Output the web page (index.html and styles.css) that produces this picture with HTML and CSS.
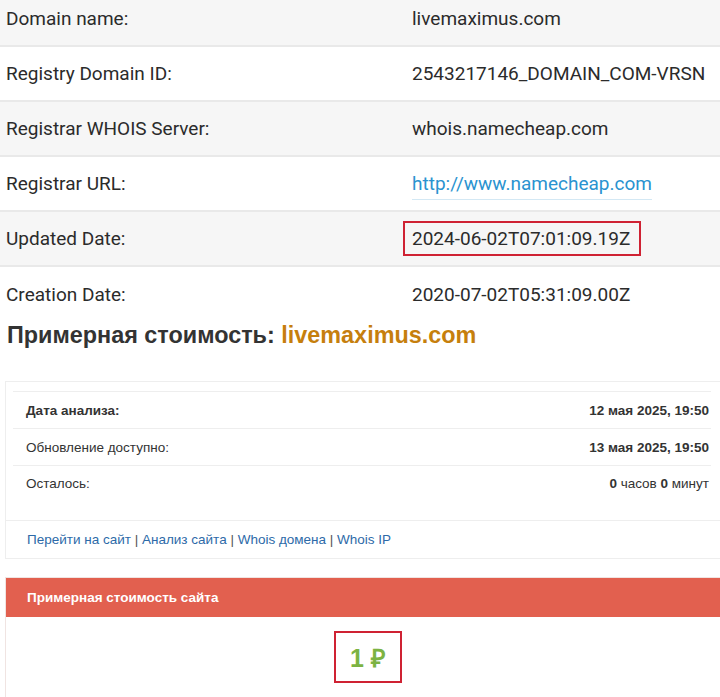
FILE: index.html
```html
<!DOCTYPE html>
<html lang="ru">
<head>
    <meta charset="UTF-8">
    <meta name="viewport" content="width=device-width, initial-scale=1.0">
    <title>Whois livemaximus.com</title>
    <link rel="stylesheet" href="styles.css">
</head>
<body>
    <div class="whois">
        <div class="whois-row">
            <span class="whois-label">Domain name:</span>
            <span class="whois-value">livemaximus.com</span>
        </div>
        <div class="whois-row">
            <span class="whois-label">Registry Domain ID:</span>
            <span class="whois-value">2543217146_DOMAIN_COM-VRSN</span>
        </div>
        <div class="whois-row">
            <span class="whois-label">Registrar WHOIS Server:</span>
            <span class="whois-value">whois.namecheap.com</span>
        </div>
        <div class="whois-row">
            <span class="whois-label">Registrar URL:</span>
            <span class="whois-value"><a class="whois-link" href="#">http://www.namecheap.com</a></span>
        </div>
        <div class="whois-row">
            <span class="whois-label">Updated Date:</span>
            <span class="whois-value"><span class="marked">2024-06-02T07:01:09.19Z</span></span>
        </div>
        <div class="whois-row">
            <span class="whois-label">Creation Date:</span>
            <span class="whois-value">2020-07-02T05:31:09.00Z</span>
        </div>
    </div>

    <h2 class="price-title">Примерная стоимость: <span class="domain">livemaximus.com</span></h2>

    <div class="info-box">
        <table class="info-table">
            <tr>
                <td><b>Дата анализа:</b></td>
                <td class="right"><b>12 мая 2025, 19:50</b></td>
            </tr>
            <tr>
                <td>Обновление доступно:</td>
                <td class="right"><b>13 мая 2025, 19:50</b></td>
            </tr>
            <tr class="last">
                <td>Осталось:</td>
                <td class="right"><b>0</b> часов <b>0</b> минут</td>
            </tr>
        </table>
        <div class="info-links">
            <a href="#">Перейти на сайт</a> | <a href="#">Анализ сайта</a> | <a href="#">Whois домена</a> | <a href="#">Whois IP</a>
        </div>
    </div>

    <div class="cost-panel">
        <div class="cost-head">Примерная стоимость сайта</div>
        <div class="cost-body">
            <span class="cost-value">1 ₽</span>
        </div>
    </div>
</body>
</html>
```

FILE: styles.css
```css
* {
    margin: 0;
    padding: 0;
    box-sizing: border-box;
}

body {
    background-color: #fff;
    color: #333;
    font-family: "Liberation Sans", Arial, sans-serif;
    overflow: hidden;
}

/* whois table */
.whois {
    margin-top: -8px;
    font-family: Roboto, "Liberation Sans", sans-serif;
    font-size: 19px;
    color: #2b2b2b;
}

.whois-row {
    display: flex;
    align-items: center;
    height: 55px;
    padding-left: 6px;
    border-bottom: 2px solid #e9e9e9;
}

.whois-row:nth-child(odd) {
    background-color: #f6f6f6;
}

.whois-row:last-child {
    border-bottom: none;
    background-color: #fff;
}

.whois-label {
    width: 406px;
}

.whois-link {
    color: #2a93d0;
    text-decoration: none;
    padding-bottom: 4px;
    border-bottom: 1px solid #d3e8f4;
}

.marked {
    display: inline-block;
    padding: 4px 9px 4px 7px;
    margin-left: -9px;
    border: 2px solid #cf2233;
}

/* estimated price heading */
.price-title {
    font-size: 23.4px;
    line-height: 26px;
    padding-left: 7px;
    color: #333;
}

.price-title .domain {
    color: #c67f0d;
}

/* analysis box */
.info-box {
    margin: 33px 0 0 5px;
    border: 1px solid #eee;
    border-right: none;
    padding-top: 9px;
}

.info-table {
    width: calc(100% - 16px);
    margin-left: 7px;
    border-collapse: collapse;
    font-size: 13.5px;
}

.info-table td {
    height: 37px;
    padding: 0 13px;
    border-top: 1px solid #eee;
}

.info-table .last td {
    height: 54px;
    vertical-align: top;
    padding-top: 10px;
}

.info-table .right {
    text-align: right;
    padding-right: 2px;
}

.info-links {
    border-top: 1px solid #eee;
    height: 38px;
    padding: 11px 21px 0;
    font-size: 13.5px;
    color: #555;
}

.info-links a {
    color: #2d6aa8;
    text-decoration: none;
}

/* cost panel */
.cost-panel {
    margin: 18px 0 0 5px;
    border: 1px solid #f0e4e2;
    border-right: none;
}

.cost-head {
    height: 39px;
    padding: 12px 21px 0;
    background-color: #e2604f;
    color: #fff;
    font-weight: bold;
    font-size: 13.5px;
}

.cost-body {
    display: flex;
    justify-content: center;
    padding: 14px 0 40px 10px;
}

.cost-value {
    display: inline-block;
    padding: 7px 14px 7px;
    border: 2px solid #cf2233;
    color: #7cb342;
    font-weight: bold;
    font-size: 25px;
}
```
